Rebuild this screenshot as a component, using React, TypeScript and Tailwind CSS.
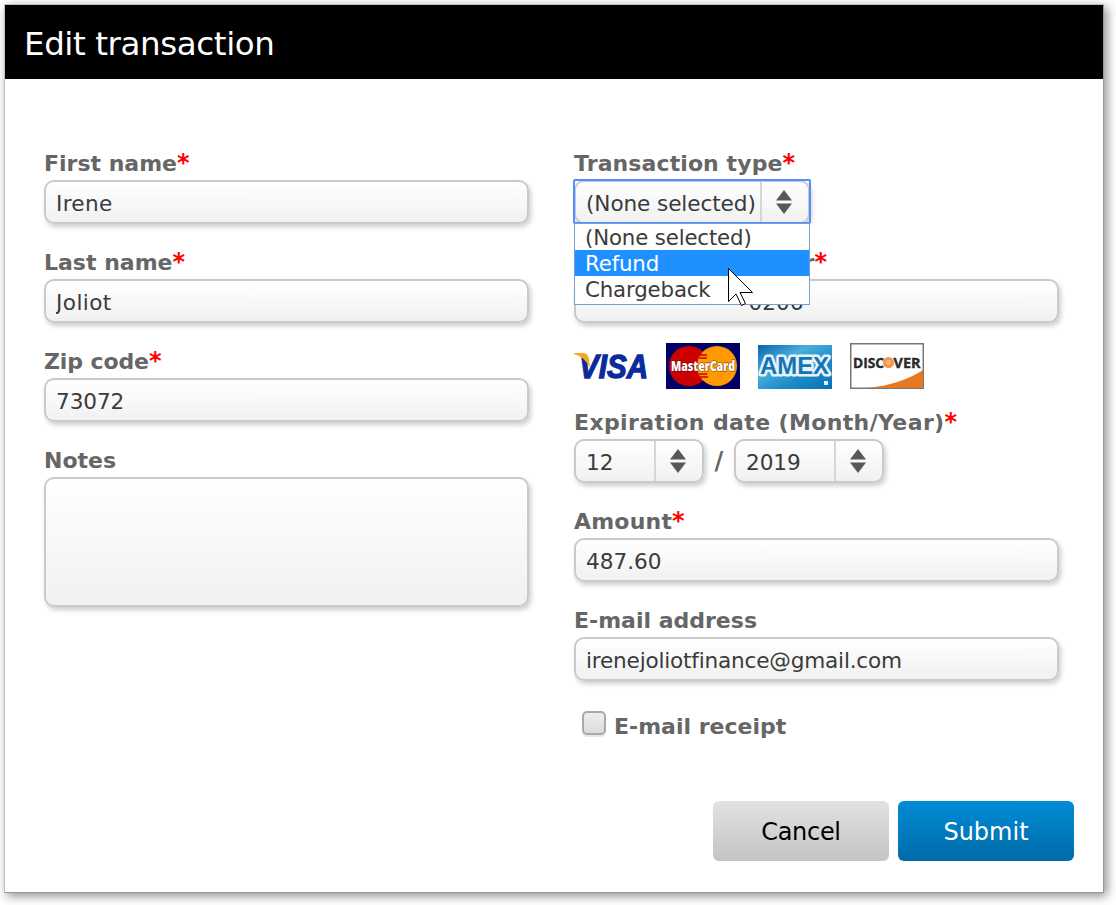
import { useState } from 'react';
import type { ReactNode } from 'react';

const types = ['(None selected)', 'Refund', 'Chargeback'];

const fieldBox =
  'border-2 border-[#cacaca] rounded-[10px] bg-linear-to-b from-white to-[#f1f1f1] shadow-[2px_3px_5px_rgba(0,0,0,0.2)] text-[#3b3b3b] text-[21.6px] outline-none [font-variant-ligatures:none]';

interface FieldProps {
  label: string;
  required?: boolean;
  spacing?: string;
  children: ReactNode;
}

function Field({ label, required, spacing = '', children }: FieldProps) {
  return (
    <div>
      <div className="h-[30px] leading-[27px] text-[22px] font-bold text-[#666666] whitespace-nowrap">
        <span className={spacing}>{label}</span>
        {required && (
          <span className="text-[#ff0000] text-[24px] leading-none">*</span>
        )}
      </div>
      {children}
    </div>
  );
}

function TextInput({ value, spacing = '' }: { value: string; spacing?: string }) {
  return (
    <input
      type="text"
      defaultValue={value}
      className={`${fieldBox} ${spacing} block w-[485px] h-11 px-2.5 pt-0.5`}
    />
  );
}

function Arrows() {
  return (
    <svg width="18" height="26" viewBox="0 0 18 26" fill="#585858">
      <path d="M9 1 17 11.5H1Z" />
      <path d="M1 14.5H17L9 25Z" />
    </svg>
  );
}

function SelectBox({ value, size }: { value: string; size: string }) {
  return (
    <div className={`${fieldBox} ${size} h-11 flex`}>
      <div className="flex-1 pl-2.5 leading-[43px] tracking-[-0.1px] whitespace-nowrap">
        {value}
      </div>
      <div className="w-12 pr-0.5 border-l-2 border-[#d6d6d6] flex items-center justify-center">
        <Arrows />
      </div>
    </div>
  );
}

function Cards() {
  return (
    <div className="flex gap-[18px] h-[46px] mt-5 mb-5">
      <svg className="overflow-visible" width="74" height="46" viewBox="0 0 74 46">
        <text x="5" y="35" fontFamily="Liberation Sans" fontSize="33" fontWeight="700" fontStyle="italic" fill="#0b2a9b" stroke="#0b2a9b" strokeWidth="1.3" textLength="69" lengthAdjust="spacingAndGlyphs">
          VISA
        </text>
        <path d="M0 10H10Q14 11 15 16L16 25Q11 14 0 11Z" fill="#f5a623" />
      </svg>
      <svg className="overflow-visible" width="74" height="46" viewBox="0 0 74 46">
        <rect width="74" height="46" fill="#000066" />
        <circle cx="23" cy="23" r="20" fill="#cc0000" />
        <circle cx="51" cy="23" r="20" fill="#ff9900" />
        <path d="M34 12H41M33 15H41M33 31H41M34 34H42" stroke="#cc0000" strokeWidth="1.5" />
        <text x="5" y="28" fontFamily="Open Sans" fontSize="13.5" fontWeight="800" fill="#ffffff" stroke="#3d1020" strokeWidth="1.5" strokeOpacity="0.5" paintOrder="stroke" textLength="64" lengthAdjust="spacingAndGlyphs">
          MasterCard
        </text>
      </svg>
      <svg width="74" height="46" viewBox="0 0 74 46">
        <defs>
          <linearGradient id="amex" x1="0" y1="0" x2="1" y2="1">
            <stop offset="0" stopColor="#0a63ad" />
            <stop offset="0.35" stopColor="#4aaedb" />
            <stop offset="0.65" stopColor="#1c8cc8" />
            <stop offset="1" stopColor="#0870b8" />
          </linearGradient>
        </defs>
        <rect y="2" width="74" height="44" fill="url(#amex)" />
        <text x="2" y="31" fontFamily="Liberation Sans" fontSize="23" fontWeight="700" fill="#1674b5" stroke="#e4f3fa" strokeWidth="5" strokeLinejoin="round" paintOrder="stroke" textLength="69" lengthAdjust="spacingAndGlyphs">
          AMEX
        </text>
        <rect x="66" y="38" width="4" height="4" fill="#d9f1fb" />
      </svg>
      <svg width="74" height="46" viewBox="0 0 74 46">
        <rect x="0.75" y="0.75" width="72.5" height="44.5" fill="#fff" stroke="#777" strokeWidth="1.5" />
        <path d="M18 45Q52 41 73 27V45Z" fill="#e87722" />
        <g fontFamily="Open Sans" fontSize="15" fontWeight="700" fill="#2b2b2b" stroke="#2b2b2b" strokeWidth="0.4">
          <text x="3" y="25" textLength="31" lengthAdjust="spacingAndGlyphs">
            DISC
          </text>
          <text x="43.5" y="25" textLength="27" lengthAdjust="spacingAndGlyphs">
            VER
          </text>
        </g>
        <circle cx="38.5" cy="19.5" r="5.5" fill="#f0964f" />
        <circle cx="38.5" cy="19.5" r="2.5" fill="#f7bb8c" />
      </svg>
    </div>
  );
}

function App() {
  const [active, setActive] = useState('Refund');

  return (
    <div className="w-[1116px] h-[905px] bg-white overflow-hidden pl-1 pt-1 font-['DejaVu_Sans',Verdana,sans-serif]">
      <div className="w-[1100px] h-[889px] flex flex-col border border-t-[#c0c0c0] border-l-[#c0c0c0] border-r-[#999999] border-b-[#999999] bg-white shadow-[3px_3px_10px_rgba(0,0,0,0.45)]">
        <h1 className="h-[74px] bg-black text-white text-[32.5px] leading-[78px] tracking-[-0.4px] pl-[19px]">
          Edit transaction
        </h1>

        <div className="flex gap-[45px] pl-[39px] pt-[71px]">
          <div className="w-[485px] flex flex-col gap-[25px]">
            <Field label="First name" required>
              <TextInput value="Irene" spacing="tracking-[0.3px]" />
            </Field>
            <Field label="Last name" required>
              <TextInput value="Joliot" spacing="tracking-[0.4px]" />
            </Field>
            <Field label="Zip code" required spacing="tracking-[-0.1px]">
              <TextInput value="73072" spacing="tracking-[-0.1px]" />
            </Field>
            <Field label="Notes">
              <textarea className={`${fieldBox} block w-[485px] h-[130px] resize-none`} />
            </Field>
          </div>

          <div className="w-[485px]">
            <Field label="Transaction type" required spacing="tracking-[0.1px]">
              <div className="relative w-[236px]">
                <SelectBox value="(None selected)" size="w-[236px]" />
                <div className="absolute -left-px -top-px w-[238px] h-[45px] border-2 border-[#4d90fe] rounded-[2px]" />
                <ul className="absolute left-0 top-[43px] z-10 w-[236px] h-[82px] bg-white border border-[#7b9bd6] text-[21.3px] tracking-[-0.15px] text-[#3b3b3b]">
                  {types.map((type) => (
                    <li
                      key={type}
                      onMouseEnter={() => setActive(type)}
                      className={`h-[26px] leading-[27px] pl-2.5 ${
                        type === active ? 'bg-[#1e90ff] text-white' : ''
                      }`}
                    >
                      {type}
                    </li>
                  ))}
                </ul>
                <svg className="absolute left-[153px] top-[87px] z-20" width="27" height="40" viewBox="0 0 27 40">
                  <path d="M1.5 1.5V34.5L9 27L14.5 38.5L18.5 36.5L13 25.5H25.5Z" fill="#fff" stroke="#000" />
                </svg>
              </div>
            </Field>

            <div className="mt-[25px]">
              <Field label="Credit card number" required spacing="tracking-[-0.05px]">
                <div className={`${fieldBox} w-[485px] h-11 pl-2.5 leading-[44px]`}>
                  <span className="tracking-[2.75px]">************</span>0206
                </div>
              </Field>
            </div>

            <Cards />

            <Field label="Expiration date (Month/Year)" required spacing="tracking-[0.38px]">
              <div className="flex items-center">
                <SelectBox value="12" size="w-[130px]" />
                <span className="w-[30px] text-center text-[24px] font-bold text-[#666666]">/</span>
                <SelectBox value="2019" size="w-[150px]" />
              </div>
            </Field>

            <div className="mt-[25px] flex flex-col gap-[25px]">
              <Field label="Amount" required spacing="tracking-[0.2px]">
                <TextInput value="487.60" />
              </Field>
              <Field label="E-mail address">
                <TextInput value="irenejoliotfinance@gmail.com" spacing="tracking-[-0.2px]" />
              </Field>
            </div>

            <label className="flex items-start mt-[30px] pl-2">
              <input
                type="checkbox"
                className="appearance-none size-6 border-2 border-[#aaaaaa] rounded-[5px] bg-linear-to-b from-[#eeeeee] to-[#dcdcdc] shadow-[0_2px_1px_rgba(0,0,0,0.1)]"
              />
              <span className="ml-2 mt-0.5 leading-[27px] text-[22px] font-bold text-[#666666]">
                E-mail receipt
              </span>
            </label>
          </div>
        </div>

        <div className="mt-auto mb-[31px] mr-[29px] flex justify-end gap-[9px] text-2xl">
          <button className="w-44 h-[60px] pt-0.5 rounded-md bg-linear-to-b from-[#e2e2e2] to-[#c4c4c4] text-black tracking-[-0.3px]">
            Cancel
          </button>
          <button className="w-44 h-[60px] pt-0.5 rounded-md bg-linear-to-b from-[#008cd8] to-[#006ba6] text-white">
            Submit
          </button>
        </div>
      </div>
    </div>
  );
}

export default App;
